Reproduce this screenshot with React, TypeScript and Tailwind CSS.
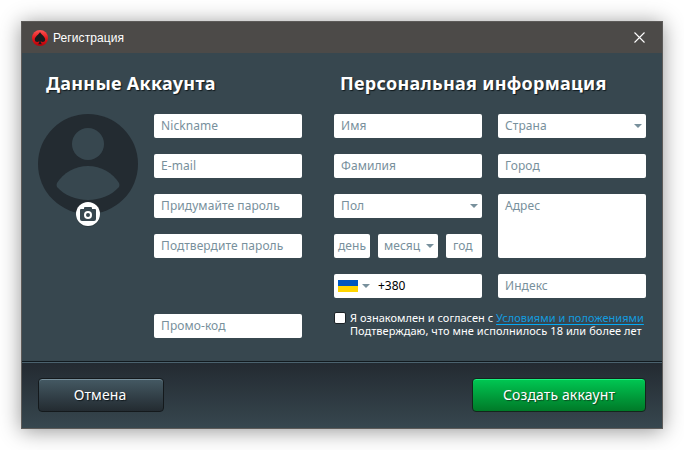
import type { ReactNode } from "react";

function Caret() {
  return (
    <svg width="8" height="4" viewBox="0 0 8 4" className="shrink-0">
      <path d="M0 0h8L4 4z" fill="#78909c" />
    </svg>
  );
}

function Field({ label, caret, className = "h-6 w-[148px] pl-[7px] pr-1" }: { label: string; caret?: boolean; className?: string }) {
  return (
    <div className={`flex shrink-0 justify-between rounded-[2px] bg-white text-[12px] leading-6 tracking-[0.08px] text-[#78909c] ${className}`}>
      <span className="whitespace-nowrap">{label}</span>
      {caret && (
        <span className="flex h-6 items-center">
          <Caret />
        </span>
      )}
    </div>
  );
}

function Heading({ children, className }: { children: ReactNode; className: string }) {
  return (
    <h2 className={`whitespace-nowrap text-[18px] font-bold leading-6 tracking-[0.28px] text-white [text-shadow:1px_1px_1px_#10191d] ${className}`}>
      {children}
    </h2>
  );
}

function Avatar() {
  return (
    <div className="relative h-[100px] w-[100px] shrink-0">
      <svg width="100" height="100" viewBox="0 0 100 100">
        <circle cx="50" cy="50" r="50" fill="#232b31" />
        <circle cx="50" cy="30" r="16" fill="#37474f" />
        <path d="M19 69C25 59 37 52 50 52s25 7 31 17q1 2 0 4C74 81 62 86 50 86S26 81 19 73q-1-2 0-4z" fill="#37474f" />
      </svg>
      <svg width="26" height="26" viewBox="0 0 26 26" className="absolute left-[37px] top-[87px]">
        <circle cx="13" cy="14" r="12" fill="#1c272c" opacity=".45" />
        <circle cx="13" cy="13" r="12" fill="#fff" />
        <path d="M10 6h6q1 0 1 1v1h3q1 0 1 1v9q0 2-2 2H7q-2 0-2-2V9q0-1 1-1h3V7q0-1 1-1z" fill="#37474f" />
        <circle cx="13" cy="14" r="4" fill="#fff" />
        <circle cx="13" cy="14" r="2" fill="#37474f" />
      </svg>
    </div>
  );
}

function Logo() {
  return (
    <svg width="16" height="16" viewBox="0 0 16 16">
      <defs>
        <linearGradient id="logo" x1="0" y1="0" x2="0" y2="1">
          <stop offset="0" stopColor="#ff5555" />
          <stop offset=".5" stopColor="#e3191c" />
          <stop offset="1" stopColor="#b80008" />
        </linearGradient>
      </defs>
      <circle cx="8" cy="8" r="8" fill="url(#logo)" />
      <path d="M8 2C7 4.500 2.800 6.500 2.800 9.500c0 2.800 3.300 3.200 4.500 1.500 0 1.500-.3 2.300-1.300 3.200h4c-1-.9-1.300-1.700-1.300-3.200 1.200 1.700 4.500 1.300 4.500-1.500C13.200 6.500 9 4.500 8 2z" fill="#171b1d" />
    </svg>
  );
}

export default function App() {
  return (
    <div className="h-[450px] w-[684px] overflow-hidden bg-white p-[21px] font-['Noto_Sans','Open_Sans',sans-serif]">
      <div className="flex h-[408px] w-[642px] flex-col border border-[#5d5b59] bg-[#37474f] shadow-[0_2px_20px_rgba(0,0,0,0.42)]">
        <header className="flex h-[31px] shrink-0 items-center bg-[#4c4a48] pl-[10px] pr-[18px]">
          <Logo />
          <span className="ml-[5px] flex-1 font-['Liberation_Sans',Arial,sans-serif] text-[12px] leading-4 tracking-[0.08px] text-white">Регистрация</span>
          <svg width="11" height="11" viewBox="0 0 11 11" className="-mr-px">
            <path d="M.5.5l10 10M10.500.5l-10 10" stroke="#fff" strokeWidth="1.100" />
          </svg>
        </header>

        <main className="flex h-[308px] shrink-0 pl-4 pt-[18px]">
          <section className="w-[264px] shrink-0">
            <Heading className="ml-2">Данные Аккаунта</Heading>
            <div className="mt-[19px] flex gap-4">
              <Avatar />
              <div className="flex flex-col gap-4">
                <Field label="Nickname" />
                <Field label="E-mail" />
                <Field label="Придумайте пароль" />
                <Field label="Подтвердите пароль" />
                <div className="mt-10">
                  <Field label="Промо-код" />
                </div>
              </div>
            </div>
          </section>

          <section className="ml-8 w-[312px] shrink-0">
            <Heading className="ml-1.5">Персональная информация</Heading>
            <div className="mt-[19px] flex gap-4">
              <div className="flex flex-col gap-4">
                <Field label="Имя" />
                <Field label="Фамилия" />
                <Field label="Пол" caret />
                <div className="flex gap-2">
                  <Field label="день" className="h-6 w-9 pl-1" />
                  <Field label="месяц" caret className="h-6 w-[60px] pl-1.5 pr-1" />
                  <Field label="год" className="h-6 w-9 pl-[7px]" />
                </div>
                <div className="flex h-6 w-[148px] items-center rounded-[2px] bg-white pl-1 text-[12px] text-black">
                  <div className="h-3 w-5 shrink-0 bg-[#ffd500]">
                    <div className="h-1.5 bg-[#0057c0]" />
                  </div>
                  <span className="ml-1 flex">
                    <Caret />
                  </span>
                  <span className="ml-2">+380</span>
                </div>
              </div>
              <div className="flex flex-col gap-4">
                <Field label="Страна" caret />
                <Field label="Город" />
                <Field label="Адрес" className="h-16 w-[148px] pl-[7px]" />
                <Field label="Индекс" />
              </div>
            </div>
            <div className="mt-[13px] flex">
              <div className="mt-px h-3 w-3 shrink-0 rounded-[2px] border border-[#1b2226] bg-white" />
              <div className="ml-1 whitespace-nowrap text-[11px] leading-[13px] text-white">
                <p className="tracking-[0.03px]">
                  Я ознакомлен и согласен с{" "}
                  <a className="text-[#139bdf] underline decoration-[#03a9f4] decoration-1 underline-offset-2">Условиями и положениями</a>
                </p>
                <p className="tracking-[0.06px]">Подтверждаю, что мне исполнилось 18 или более лет</p>
              </div>
            </div>
          </section>
        </main>

        <footer className="flex flex-1 items-start justify-between border-t border-[#11191e] bg-gradient-to-b from-[#232a31] to-[#37474f] px-4 pt-4 shadow-[inset_0_1px_0_#4b626e]">
          <button className="h-[34px] w-[126px] rounded-[4px] border border-[#14191c] bg-gradient-to-b from-[#455a64] to-[#232b31] pr-0.5 text-[14px] leading-8 tracking-[0.08px] text-white shadow-[inset_0_1px_0_#78909c] [text-shadow:1px_1px_1px_#10191d]">
            Отмена
          </button>
          <button className="h-[34px] w-[174px] rounded-[4px] border border-[#14251c] bg-gradient-to-b from-[#00c853] to-[#007a28] text-[14px] leading-8 tracking-[0.12px] text-white shadow-[inset_0_1px_0_#19f080] [text-shadow:1px_1px_1px_#0b4a20]">
            Создать аккаунт
          </button>
        </footer>
      </div>
    </div>
  );
}
